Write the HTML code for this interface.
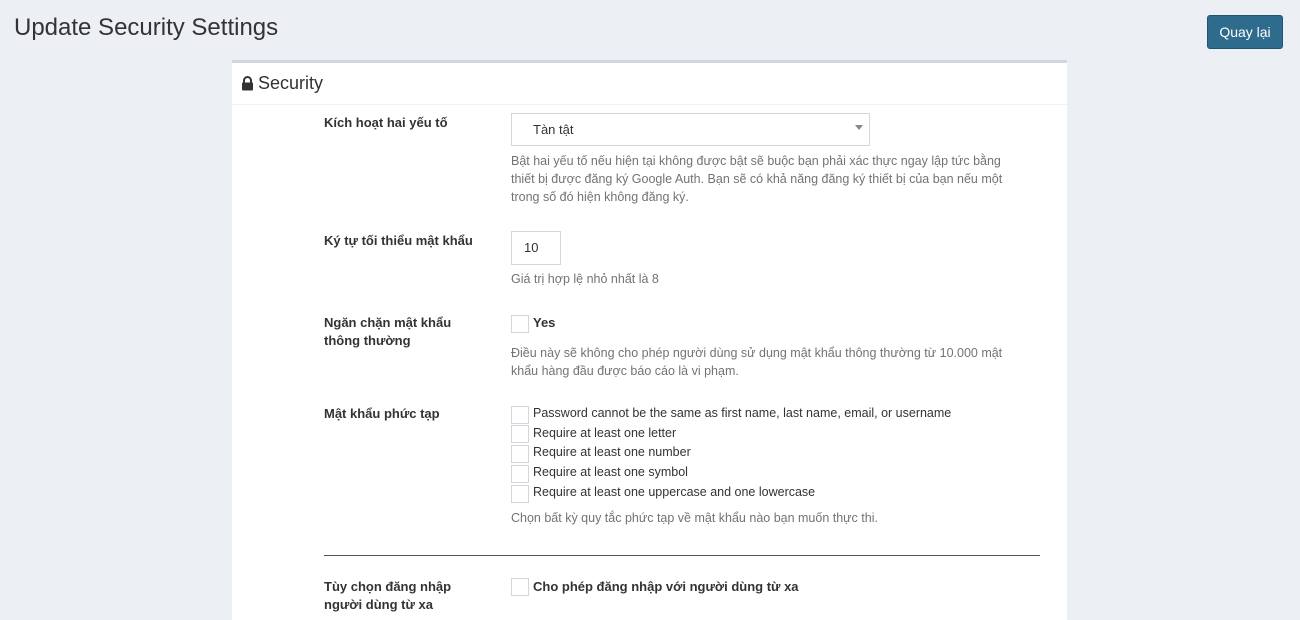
<!DOCTYPE html>
<html><head><meta charset="utf-8"><style>
*{margin:0;padding:0;box-sizing:border-box}
body{width:1300px;height:603px;overflow:hidden;background:#eceff4;font-family:"Liberation Sans",sans-serif;color:#333;position:relative}
.a{position:absolute}
h1{position:absolute;left:14px;top:14px;font-size:24px;font-weight:400;color:#333}
.btn{left:1207px;top:15px;width:76px;height:34px;background:#2e6b8d;border:1px solid #1f5573;border-radius:3px;color:#fff;font-size:14px;text-align:center;line-height:32px}
.panel{left:232px;top:60px;width:835px;height:560px;background:#fff;border-top:3px solid #d2d6de}
.hd{left:0;top:0;width:835px;height:42px;border-bottom:1px solid #f1f1f1}
.lbl{font-size:13px;font-weight:700;color:#333;line-height:18px}
.help{font-size:12.5px;color:#737373;line-height:18px}
.txt{font-size:12.5px;color:#333;line-height:19.5px}
.cb{width:18px;height:18px;border:1px solid #d2d6de;background:#fff}
</style></head><body>
<h1>Update Security Settings</h1>
<div class="a btn">Quay lại</div>
<div class="a panel">
 <div class="a hd">
  <svg class="a" style="left:9px;top:13px" width="13" height="15" viewBox="0 0 13 15"><path d="M3 7V4.5a3.5 3.5 0 0 1 7 0V7" fill="none" stroke="#333" stroke-width="2"/><rect x="1" y="6.5" width="11" height="8" rx="1" fill="#333"/></svg>
  <div class="a" style="left:26px;top:10px;font-size:18px;color:#333">Security</div>
 </div>
</div>
<div class="a lbl" style="left:324px;top:114px">Kích hoạt hai yếu tố</div>
<div class="a" style="left:511px;top:113px;width:359px;height:33px;border:1px solid #d2d6de;font-size:13px;line-height:31px;padding-left:21px">Tàn tật</div>
<div class="a" style="left:855px;top:125px;width:0;height:0;border-left:4px solid transparent;border-right:4px solid transparent;border-top:5px solid #888"></div>
<div class="a help" style="left:511px;top:152px;width:512px">Bật hai yếu tố nếu hiện tại không được bật sẽ buộc bạn phải xác thực ngay lập tức bằng thiết bị được đăng ký Google Auth. Bạn sẽ có khả năng đăng ký thiết bị của bạn nếu một trong số đó hiện không đăng ký.</div>

<div class="a lbl" style="left:324px;top:232px">Ký tự tối thiểu mật khẩu</div>
<div class="a" style="left:511px;top:231px;width:50px;height:34px;border:1px solid #d2d6de;font-size:13px;line-height:32px;padding-left:12px">10</div>
<div class="a help" style="left:511px;top:270px">Giá trị hợp lệ nhỏ nhất là 8</div>

<div class="a lbl" style="left:324px;top:314px;width:150px">Ngăn chặn mật khẩu thông thường</div>
<div class="a cb" style="left:511px;top:315px"></div>
<div class="a lbl" style="left:533px;top:314px">Yes</div>
<div class="a help" style="left:511px;top:344px;width:512px">Điều này sẽ không cho phép người dùng sử dụng mật khẩu thông thường từ 10.000 mật khẩu hàng đầu được báo cáo là vi phạm.</div>

<div class="a lbl" style="left:324px;top:405px">Mật khẩu phức tạp</div>
<div class="a cb" style="left:511px;top:406px"></div><div class="a txt" style="left:533px;top:404px">Password cannot be the same as first name, last name, email, or username</div>
<div class="a cb" style="left:511px;top:425px"></div><div class="a txt" style="left:533px;top:424px">Require at least one letter</div>
<div class="a cb" style="left:511px;top:445px"></div><div class="a txt" style="left:533px;top:443px">Require at least one number</div>
<div class="a cb" style="left:511px;top:465px"></div><div class="a txt" style="left:533px;top:463px">Require at least one symbol</div>
<div class="a cb" style="left:511px;top:485px"></div><div class="a txt" style="left:533px;top:483px">Require at least one uppercase and one lowercase</div>
<div class="a help" style="left:511px;top:509px">Chọn bất kỳ quy tắc phức tạp về mật khẩu nào bạn muốn thực thi.</div>

<div class="a" style="left:324px;top:555px;width:716px;height:1px;background:#555"></div>

<div class="a lbl" style="left:324px;top:578px;width:150px">Tùy chọn đăng nhập người dùng từ xa</div>
<div class="a cb" style="left:511px;top:578px"></div>
<div class="a lbl" style="left:533px;top:578px">Cho phép đăng nhập với người dùng từ xa</div>
</body></html>
